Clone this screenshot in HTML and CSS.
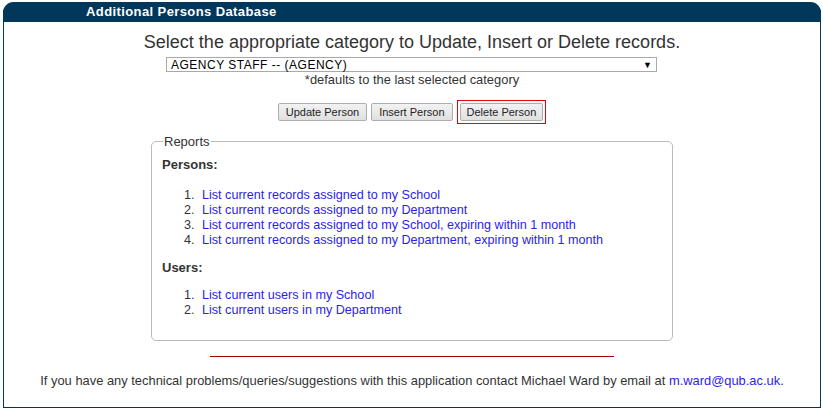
FILE: index.html
```html
<!DOCTYPE html>
<html lang="en">
<head>
  <meta charset="UTF-8">
  <title>Additional Persons Database</title>
  <link rel="stylesheet" href="styles.css">
</head>
<body>
  <div class="frame">
    <div class="frame-head">Additional Persons Database</div>
    <div class="frame-body">
      <h2 class="intro">Select the appropriate category to Update, Insert or Delete records.</h2>
      <div class="category">
        <div class="select">
          <span>AGENCY STAFF -- (AGENCY)</span>
          <span class="arrow">&#9660;</span>
        </div>
        <div class="hint">*defaults to the last selected category</div>
      </div>

      <div class="actions">
        <button class="btn">Update Person</button>
        <button class="btn">Insert Person</button>
        <span class="focus"><button class="btn">Delete Person</button></span>
      </div>

      <fieldset class="reports">
        <legend>Reports</legend>
        <div class="group-title">Persons:</div>
        <ol>
          <li><a href="#">List current records assigned to my School</a></li>
          <li><a href="#">List current records assigned to my Department</a></li>
          <li><a href="#">List current records assigned to my School, expiring within 1 month</a></li>
          <li><a href="#">List current records assigned to my Department, expiring within 1 month</a></li>
        </ol>
        <div class="group-title">Users:</div>
        <ol class="users">
          <li><a href="#">List current users in my School</a></li>
          <li><a href="#">List current users in my Department</a></li>
        </ol>
      </fieldset>

      <hr class="divider">

      <p class="contact">If you have any technical problems/queries/suggestions with this application contact Michael Ward by email at <a href="#">m.ward@qub.ac.uk</a>.</p>
    </div>
  </div>
</body>
</html>
```

FILE: styles.css
```css
* {
  box-sizing: border-box;
}

body {
  margin: 0;
  padding: 2px 2px 0 3px;
  font-family: "Liberation Sans", Arial, sans-serif;
  font-size: 12px;
  color: #333;
  background: #fff;
}

.frame {
  height: 406px;
  border: 1px solid #00375a;
  border-top: none;
  border-radius: 11px 11px 0 0;
  display: flex;
  flex-direction: column;
}

.frame-head {
  height: 20px;
  margin: 0 -1px;
  background: #00375a;
  border-radius: 11px 11px 0 0;
  color: #fff;
  font-weight: bold;
  font-size: 13px;
  letter-spacing: 0.4px;
  line-height: 20px;
  padding-left: 83px;
}

.frame-body {
  display: flex;
  flex-direction: column;
  align-items: center;
}

.intro {
  margin: 9px 0 0;
  font-size: 18px;
  font-weight: normal;
  line-height: 22px;
  color: #333;
}

.category {
  display: flex;
  flex-direction: column;
  align-items: center;
  margin-top: 4px;
}

.select {
  width: 491px;
  height: 15px;
  border: 1px solid #a9a9a9;
  display: flex;
  justify-content: space-between;
  align-items: center;
  padding: 0 4px 0 4px;
  font-size: 12px;
  letter-spacing: 0.5px;
  color: #000;
  margin-left: -1px;
}

.arrow {
  font-size: 9px;
  letter-spacing: 0;
}

.hint {
  font-size: 12.9px;
  line-height: 16px;
}

.actions {
  display: flex;
  align-items: center;
  gap: 4px;
  margin-top: 12px;
}

.btn {
  font-family: inherit;
  font-size: 11px;
  color: #222;
  height: 18px;
  padding: 0 7px;
  border: 1px solid #adadad;
  border-radius: 2px;
  background: linear-gradient(#f2f2f2, #e0e0e0);
}

.focus {
  border: 1px solid #e00;
  padding: 2px;
  display: flex;
}

.focus .btn {
  padding: 0 6px;
}

.reports {
  width: 522px;
  height: 207px;
  margin: 10px 0 0;
  padding: 0 10px;
  border: 1px solid #bbb;
  border-radius: 5px;
}

.reports legend {
  font-size: 13px;
  padding: 0 1px;
  margin-left: 1px;
}

.group-title {
  font-weight: bold;
  font-size: 13px;
  margin-top: 8px;
}

.reports ol {
  margin: 16px 0 12px;
  padding-left: 36px;
  font-size: 12.6px;
  line-height: 15px;
}

.reports li {
  padding-left: 4px;
}

.reports ol.users {
  margin-top: 13px;
}

.reports a,
.contact a {
  color: #2b1ee6;
  text-decoration: none;
}

.divider {
  width: 404px;
  margin: 15px 0 0;
  border: none;
  border-top: 1px solid #a00000;
}

.contact {
  margin: 16px 0 0;
  font-size: 12.9px;
}
```
